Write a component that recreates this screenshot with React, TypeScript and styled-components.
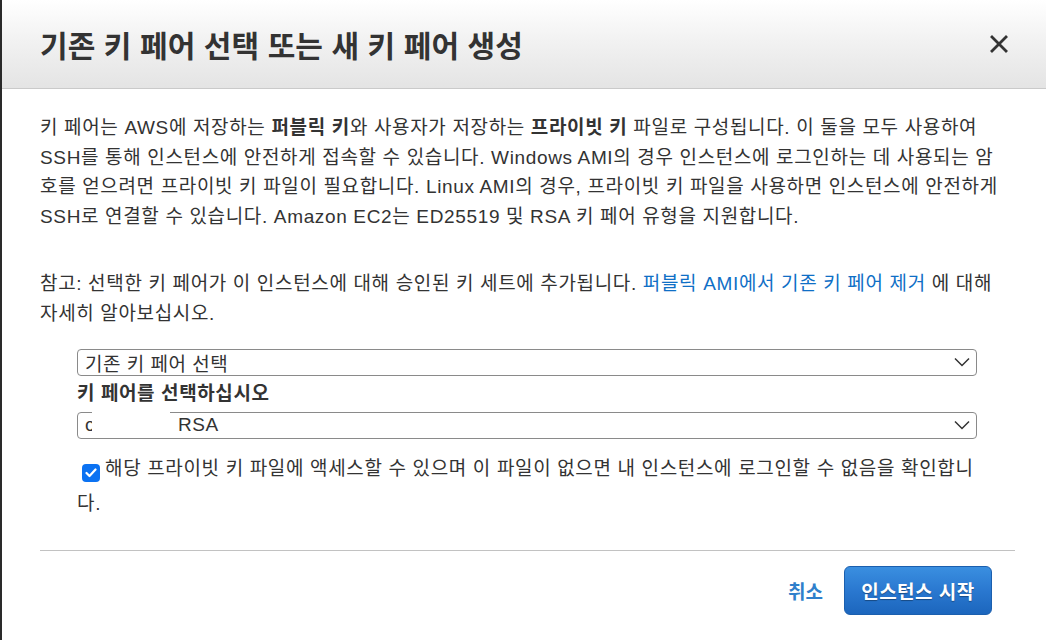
import React from 'react';
import styled, { createGlobalStyle } from 'styled-components';

const GlobalStyle = createGlobalStyle`
  html, body {
    margin: 0;
    padding: 0;
    background: #ffffff;
  }
  body {
    font-family: "Liberation Sans", "Noto Sans CJK KR", sans-serif;
    color: #333333;
  }
`;

const Modal = styled.section`
  width: 1046px;
  height: 640px;
  box-sizing: border-box;
  border-left: 2px solid #2a2a2a;
  background: #ffffff;
  overflow: hidden;
`;

const Header = styled.header`
  height: 88px;
  display: flex;
  align-items: center;
  justify-content: space-between;
  padding: 0 35px 0 38px;
  background: linear-gradient(to bottom, #ffffff 0%, #f2f2f2 45%, #e4e4e4 100%);
  border-bottom: 1px solid #cacaca;
`;

const Title = styled.h1`
  margin: 0;
  font-size: 30px;
  font-weight: 700;
  color: #333333;
  letter-spacing: 0.1px;
`;

const CloseButton = styled.button`
  width: 24px;
  height: 24px;
  padding: 0;
  border: none;
  background: transparent;
  display: flex;
  align-items: center;
  justify-content: center;
  cursor: pointer;
`;

const Body = styled.div`
  padding: 24px 31px 0 38px;
`;

const Paragraph = styled.p<{ $gap?: number }>`
  margin: 0;
  margin-top: ${(p) => p.$gap ?? 0}px;
  font-size: 19px;
  letter-spacing: 0.65px;
  line-height: 29.6px;
  white-space: nowrap;
`;

const Link = styled.a`
  color: #0f6fc6;
  text-decoration: none;
`;

const Form = styled.div`
  margin: 20px 38px 0 37px;
`;

const SelectBox = styled.div`
  position: relative;
  height: 27px;
  box-sizing: border-box;
  border: 1px solid #8a8a8a;
  border-radius: 4px;
  display: flex;
  align-items: center;
  justify-content: space-between;
  padding: 0 6px 0 7px;
  font-size: 19px;
  letter-spacing: 0.5px;
  color: #333333;
  background: #ffffff;
`;

const Redaction = styled.span`
  position: absolute;
  left: 14px;
  top: -3px;
  width: 78px;
  height: 26px;
  background: #ffffff;
`;

const MaskedGap = styled.span`
  display: inline-block;
  width: 83px;
`;

const FieldLabel = styled.div`
  font-size: 19px;
  font-weight: 700;
  letter-spacing: 0.6px;
  line-height: 36px;
  color: #333333;
`;

const CheckRow = styled.label`
  display: block;
  margin-top: 12px;
  font-size: 19px;
  letter-spacing: 0.65px;
  line-height: 35px;
  color: #333333;
  white-space: nowrap;
`;

const CheckMark = styled.span`
  display: inline-flex;
  align-items: center;
  justify-content: center;
  width: 18px;
  height: 18px;
  margin: 0 5px 0 5px;
  vertical-align: -3px;
  border-radius: 4px;
  background: #0b72f2;
`;

const Divider = styled.hr`
  margin: 29px 0 0 0;
  border: none;
  border-top: 1px solid #c2c2c2;
`;

const Footer = styled.footer`
  display: flex;
  justify-content: flex-end;
  align-items: center;
  gap: 21px;
  padding: 15px 23px 0 0;
`;

const CancelLink = styled.a`
  font-size: 19px;
  font-weight: 700;
  color: #2f7fcb;
  text-decoration: none;
`;

const PrimaryButton = styled.button`
  width: 148px;
  height: 49px;
  padding: 0;
  border: 1px solid #1b5fae;
  border-radius: 6px;
  background: linear-gradient(to bottom, #3a8fe0 0%, #2a78d0 50%, #1c66bd 100%);
  color: #ffffff;
  font-family: "Liberation Sans", "Noto Sans CJK KR", sans-serif;
  font-size: 19px;
  font-weight: 700;
  letter-spacing: 0.5px;
  text-shadow: 0 1px 1px rgba(0, 0, 0, 0.35);
  cursor: pointer;
`;

const Chevron = () => (
  <svg width="16" height="10" viewBox="0 0 16 10">
    <polyline points="1,1.5 8,8.5 15,1.5" fill="none" stroke="#333" strokeWidth="1.5" />
  </svg>
);

const Select = ({ children }: { children: React.ReactNode }) => (
  <SelectBox>
    <span>{children}</span>
    <Chevron />
  </SelectBox>
);

export default function App() {
  return (
    <Modal>
      <GlobalStyle />
      <Header>
        <Title>기존 키 페어 선택 또는 새 키 페어 생성</Title>
        <CloseButton aria-label="닫기">
          <svg width="20" height="20" viewBox="0 0 20 20">
            <path d="M3 3 L17 17 M17 3 L3 17" stroke="#333" strokeWidth="2.8" strokeLinecap="square" />
          </svg>
        </CloseButton>
      </Header>
      <Body>
        <Paragraph>
          키 페어는 AWS에 저장하는 <b>퍼블릭 키</b>와 사용자가 저장하는 <b>프라이빗 키</b> 파일로 구성됩니다. 이 둘을 모두 사용하여
          <br />
          SSH를 통해 인스턴스에 안전하게 접속할 수 있습니다. Windows AMI의 경우 인스턴스에 로그인하는 데 사용되는 암
          <br />
          호를 얻으려면 프라이빗 키 파일이 필요합니다. Linux AMI의 경우, 프라이빗 키 파일을 사용하면 인스턴스에 안전하게
          <br />
          SSH로 연결할 수 있습니다. Amazon EC2는 ED25519 및 RSA 키 페어 유형을 지원합니다.
        </Paragraph>
        <Paragraph $gap={38}>
          참고: 선택한 키 페어가 이 인스턴스에 대해 승인된 키 세트에 추가됩니다. <Link href="#">퍼블릭 AMI에서 기존 키 페어 제거</Link> 에 대해
          <br />
          자세히 알아보십시오.
        </Paragraph>
        <Form>
          <Select>기존 키 페어 선택</Select>
          <FieldLabel>키 페어를 선택하십시오</FieldLabel>
          <SelectBox>
            <span>
              c<MaskedGap />RSA
            </span>
            <Redaction />
            <Chevron />
          </SelectBox>
          <CheckRow>
            <CheckMark>
              <svg width="12" height="10" viewBox="0 0 12 10">
                <polyline points="1.5,5 4.5,8 10.5,1.5" fill="none" stroke="#fff" strokeWidth="2.2" strokeLinecap="round" strokeLinejoin="round" />
              </svg>
            </CheckMark>
            해당 프라이빗 키 파일에 액세스할 수 있으며 이 파일이 없으면 내 인스턴스에 로그인할 수 없음을 확인합니
            <br />
            다.
          </CheckRow>
        </Form>
        <Divider />
        <Footer>
          <CancelLink href="#">취소</CancelLink>
          <PrimaryButton>인스턴스 시작</PrimaryButton>
        </Footer>
      </Body>
    </Modal>
  );
}
